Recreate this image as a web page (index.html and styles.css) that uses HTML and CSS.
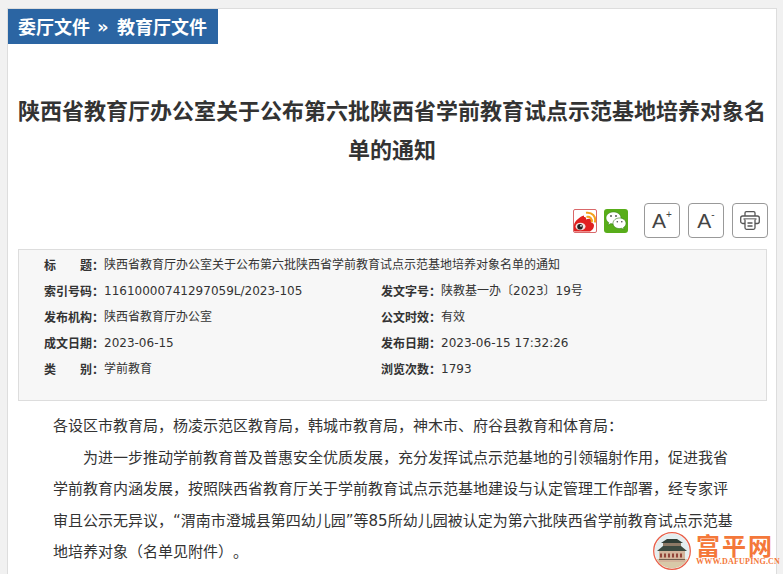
FILE: index.html
```html
<!DOCTYPE html>
<html lang="zh-CN">
<head>
  <meta charset="UTF-8" />
  <title>陕西省教育厅办公室关于公布第六批陕西省学前教育试点示范基地培养对象名单的通知</title>
  <link rel="stylesheet" href="styles.css">
</head>
<body>

  <div class="page">
    <div class="card">
      <div class="crumb"><span>委厅文件</span><span class="crumb_sep">»</span><span>教育厅文件</span></div>

      <h1 class="title">陕西省教育厅办公室关于公布第六批陕西省学前教育试点示范基地培养对象名单的通知</h1>

      <div class="tools">
        <a class="share" href="#" title="微博">
          <svg width="24" height="24" viewBox="0 0 24 24">
            <rect x="0.500" y="0.500" width="23" height="23" rx="1.500" fill="#fff" stroke="#d9686a"/>
            <path d="M11 6.500C7 7.500 1.500 12 1 16v5.500a1 1 0 0 0 1 1h15c2.500-1.500 4-3.500 4-6 0-1.800-1.500-2.800-3-3.300.6-1.700.2-3-1.200-3.400-1.300-.3-2.800.2-3.800.8.400-1.800-.2-2.900-2-2.600z" fill="#e0201f"/>
            <ellipse cx="7.500" cy="17.500" rx="5" ry="3.800" fill="#f6e4e0"/>
            <circle cx="7" cy="17.800" r="2.800" fill="#222"/>
            <circle cx="8" cy="16.800" r=".9" fill="#fff"/>
            <path d="M13.500 8c3.500-.8 6 1.800 5.200 5.200" fill="none" stroke="#f5a11c" stroke-width="2"/>
            <path d="M13 3.800c6-1 10.500 3.500 8.800 9.700" fill="none" stroke="#f5a11c" stroke-width="2"/>
          </svg>
        </a>
        <a class="share" href="#" title="微信">
          <svg width="24" height="24" viewBox="0 0 24 24">
            <rect width="24" height="24" rx="3" fill="#58ad1a"/>
            <path d="M9.500 3C5.200 3 2 5.700 2 9c0 1.900 1.100 3.500 2.800 4.600l-.7 2.500 2.700-1.500c.9.300 1.700.4 2.700.4 4.300 0 7.500-2.700 7.500-6s-3.200-6-7.500-6z" fill="#fff" stroke="#2f7a10" stroke-width=".5"/>
            <path d="M15.500 9c-3.700 0-6.500 2.400-6.500 5.300s2.800 5.300 6.500 5.300c.8 0 1.500-.1 2.200-.3l2.300 1.400-.6-2.100c1.700-1 2.600-2.500 2.600-4.300C22 11.400 19.200 9 15.500 9z" fill="#fff" stroke="#2f7a10" stroke-width=".6"/>
            <circle cx="7" cy="7" r=".9" fill="#444"/>
            <circle cx="12" cy="7" r=".9" fill="#444"/>
            <circle cx="13.300" cy="12.800" r=".8" fill="#444"/>
            <circle cx="17.800" cy="12.800" r=".8" fill="#444"/>
          </svg>
        </a>
        <button class="tool_btn first_btn">A<sup>+</sup></button>
        <button class="tool_btn">A<sup>-</sup></button>
        <button class="tool_btn">
          <svg width="20" height="19" viewBox="0 0 20 19" fill="none" stroke="#555" stroke-width="1.300">
            <path d="M5 5V2a1.300 1.300 0 0 1 1.300-1.300h7.400A1.300 1.300 0 0 1 15 2v3"/>
            <rect x=".7" y="5" width="18.600" height="7.500" rx="2"/>
            <path d="M3.500 8h13" />
            <path d="M5 8.500v8.300a1.500 1.500 0 0 0 1.500 1.500h7a1.500 1.500 0 0 0 1.500-1.500V8.500" fill="#fff"/>
            <path d="M7.500 12h5M7.500 15h5"/>
          </svg>
        </button>
      </div>

      <div class="info">
        <div class="info_row info_wide"><b>标　　题：</b><span>陕西省教育厅办公室关于公布第六批陕西省学前教育试点示范基地培养对象名单的通知</span></div>
        <div class="info_row"><b>索引号码：</b><span>11610000741297059L/2023-105</span></div>
        <div class="info_row"><b>发文字号：</b><span>陕教基一办〔2023〕19号</span></div>
        <div class="info_row"><b>发布机构：</b><span>陕西省教育厅办公室</span></div>
        <div class="info_row"><b>公文时效：</b><span>有效</span></div>
        <div class="info_row"><b>成文日期：</b><span>2023-06-15</span></div>
        <div class="info_row"><b>发布日期：</b><span>2023-06-15 17:32:26</span></div>
        <div class="info_row"><b>类　　别：</b><span>学前教育</span></div>
        <div class="info_row"><b>浏览次数：</b><span>1793</span></div>
      </div>

      <div class="content">
        <p>各设区市教育局，杨凌示范区教育局，韩城市教育局，神木市、府谷县教育和体育局：</p>
        <p class="indent">为进一步推动学前教育普及普惠安全优质发展，充分发挥试点示范基地的引领辐射作用，促进我省学前教育内涵发展，按照陕西省教育厅关于学前教育试点示范基地建设与认定管理工作部署，经专家评审且公示无异议，“渭南市澄城县第四幼儿园”等85所幼儿园被认定为第六批陕西省学前教育试点示范基地培养对象（名单见附件）。</p>
      </div>
    </div>

    <div class="site_mark">
      <svg width="38" height="38" viewBox="0 0 38 38">
        <circle cx="19" cy="19" r="17.500" fill="#e4eef0"/>
        <path d="M3 27h32a17.500 17.500 0 0 1-32 0z" fill="#d8c9a8"/>
        <rect x="6" y="19" width="26" height="11" fill="#d4b59c"/>
        <rect x="10" y="11" width="18" height="4" fill="#8d7a66"/>
        <path d="M4 19l6-5h18l6 5z" fill="#3c4a40"/>
        <path d="M8 11l6-4h10l6 4z" fill="#2f3d35"/>
        <path d="M8 21.500v4M12 21.500v4M16 21.500v4M20 21.500v4M24 21.500v4M28 21.500v4" stroke="#8c3a30" stroke-width="1.800"/>
        <path d="M6 27.500h26" stroke="#6f5f50" stroke-width="1"/>
        <circle cx="19" cy="19" r="17.800" fill="none" stroke="#fff" stroke-width="1"/>
        <circle cx="19" cy="19" r="18.300" fill="none" stroke="#e8604a" stroke-width="1.300"/>
      </svg>
      <div class="mark_text">
        <div class="mark_name">富平网</div>
        <div class="mark_url">WWW.DAFUPING.CN</div>
      </div>
    </div>
  </div>

</body>
</html>
```

FILE: styles.css
```css
html, body {
  margin: 0;
  padding: 0;
  background-color: #f1f1f1;
  font-family: "DejaVu Sans", "Noto Sans CJK SC", sans-serif;
  color: #333;
  text-spacing-trim: space-all;
}

.page {
  position: relative;
  height: 574px;
  overflow: hidden;
  padding: 8px 7px 0 7px;
  box-sizing: border-box;
}

.card {
  background: white;
  border: 1px solid #ddd;
  border-bottom: none;
  width: 770px;
  height: 100%;
  box-sizing: border-box;
}

.crumb {
  display: inline-flex;
  gap: 7px;
  height: 35px;
  line-height: 35px;
  padding: 0 11px 0 10px;
  background-color: #2b65a3;
  color: white;
  font-size: 18px;
  font-weight: bold;
  font-family: "Noto Sans CJK SC", sans-serif;
  vertical-align: top;
}

.crumb_sep {
  font-family: "DejaVu Sans", sans-serif;
  width: 13px;
}

.title {
  margin: 46px 0 0 0;
  padding: 0 6px;
  font-size: 22px;
  line-height: 39px;
  font-weight: bold;
  text-align: center;
  color: #333;
  font-family: "Noto Sans CJK SC", sans-serif;
}

.tools {
  display: flex;
  align-items: center;
  margin: 35px 8px 0 0;
  justify-content: flex-end;
  height: 35px;
}

.share {
  display: block;
  height: 24px;
  margin-left: 7px;
}

.tool_btn {
  width: 36px;
  height: 35px;
  margin-left: 8px;
  padding: 0;
  display: flex;
  align-items: center;
  justify-content: center;
  background: white;
  border: 1px solid #999;
  border-radius: 4px;
  font-size: 21px;
  color: #444;
  font-family: "Liberation Sans", sans-serif;
}

.first_btn {
  margin-left: 16px;
}

.tool_btn sup {
  font-size: 10px;
  margin-top: -12px;
  line-height: 1;
}

.info {
  display: grid;
  grid-template-columns: 337px 1fr;
  margin: 11px 9px 0 10px;
  padding: 2px 0 18px 25px;
  background-color: #f7f7f7;
  border: 1px solid #ddd;
  font-size: 12px;
}

.info_row {
  display: flex;
  height: 26px;
  line-height: 26px;
  white-space: nowrap;
}

.info_wide {
  grid-column: 1 / 3;
}

.info_row b {
  width: 60px;
  flex-shrink: 0;
  font-family: "Noto Sans CJK SC", sans-serif;
}

.content {
  margin: 10px 0 0 45px;
  width: 680px;
  font-size: 15px;
  line-height: 31.5px;
}

.content p {
  margin: 0;
}

.content .indent {
  text-indent: 2em;
}

.site_mark {
  position: absolute;
  left: 653px;
  top: 532px;
  display: flex;
  gap: 5px;
}

.mark_text {
  width: 78px;
}

.mark_name {
  font-size: 24px;
  line-height: 25px;
  font-weight: bold;
  letter-spacing: 2px;
  color: #f4783a;
  white-space: nowrap;
  font-family: "Noto Sans CJK SC", sans-serif;
}

.mark_url {
  font-size: 8px;
  line-height: 9px;
  font-weight: bold;
  letter-spacing: .2px;
  color: #f4783a;
  white-space: nowrap;
  font-family: "Liberation Serif", serif;
}
```
